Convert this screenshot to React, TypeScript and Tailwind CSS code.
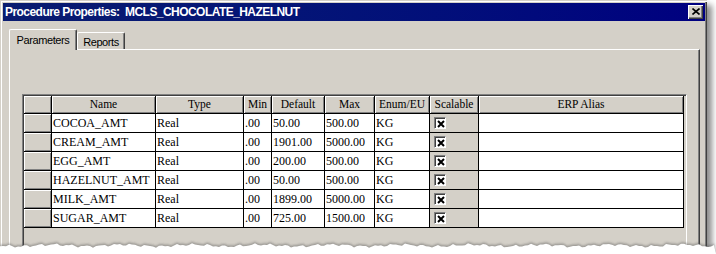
import React from 'react';

// ─── Data ─────────────────────────────────────────────────────────────────────

const HEADERS = ['', 'Name', 'Type', 'Min', 'Default', 'Max', 'Enum/EU', 'Scalable', 'ERP Alias'];

const ROWS = [
  ['COCOA_AMT', 'Real', '.00', '50.00', '500.00', 'KG'],
  ['CREAM_AMT', 'Real', '.00', '1901.00', '5000.00', 'KG'],
  ['EGG_AMT', 'Real', '.00', '200.00', '500.00', 'KG'],
  ['HAZELNUT_AMT', 'Real', '.00', '50.00', '500.00', 'KG'],
  ['MILK_AMT', 'Real', '.00', '1899.00', '5000.00', 'KG'],
  ['SUGAR_AMT', 'Real', '.00', '725.00', '1500.00', 'KG'],
];

const raised = 'bg-[#d4d0c8] shadow-[inset_1px_1px_0_#ffffff,inset_-1px_-1px_0_#808080]';

// ─── Bits ─────────────────────────────────────────────────────────────────────

function CheckBox() {
  return (
    <div className="flex h-[12px] w-[12px] items-center justify-center border border-t-[#808080] border-l-[#808080] border-r-white border-b-white bg-white shadow-[inset_1px_1px_0_#404040]">
      <svg width="8" height="8" viewBox="0 0 8 8" className="ml-[1px] mt-[1px]">
        <path d="M1 1 L7 7 M7 1 L1 7" stroke="#000" strokeWidth="2" />
      </svg>
    </div>
  );
}

function TornEdge() {
  // ragged bottom of the cropped screenshot
  const pts: string[] = [];
  for (let x = 0; x <= 716; x += 3) {
    const y = 7 + 0.9 * Math.sin(x * 0.09) + 0.9 * Math.sin(x * 0.41 + 1) + 0.6 * Math.sin(x * 1.3);
    pts.push(`${x},${y.toFixed(1)}`);
  }
  const line = pts.join(' L');
  return (
    <svg className="absolute bottom-0 left-0" width="716" height="16" viewBox="0 0 716 16">
      <defs>
        <filter id="soft" x="-5%" y="-50%" width="110%" height="200%">
          <feGaussianBlur stdDeviation="1.2" />
        </filter>
      </defs>
      <path d={`M0,16 L${line} L716,16 Z`} fill="rgba(80,80,80,0.45)" filter="url(#soft)" transform="translate(0,-1)" />
      <path d={`M0,16 L${line} L716,16 Z`} fill="#ffffff" transform="translate(0,0.5)" />
    </svg>
  );
}

// ─── Component ────────────────────────────────────────────────────────────────

export default function App() {
  return (
    <div className="relative h-[254px] w-[716px] overflow-hidden bg-white">
      <div className="h-[254px] w-[707px] bg-[#d4d0c8] p-[3px] pr-[2px] shadow-[inset_1px_1px_0_#d4d0c8,inset_2px_2px_0_#ffffff,inset_-1px_-1px_0_#404040,inset_-2px_-2px_0_#808080,5px_5px_6px_rgba(0,0,0,0.45)]">
        {/* title bar */}
        <div className="flex h-[18px] items-center justify-between bg-gradient-to-r from-[#0a1c70] to-[#000080] pl-[2px] pr-[2px]">
          <span className="whitespace-pre font-['Liberation_Sans',Arial,sans-serif] text-[12px] font-bold tracking-[-0.55px] text-white">
            {'Procedure Properties:  MCLS_CHOCOLATE_HAZELNUT'}
          </span>
          <div className="flex h-[14px] w-[15px] items-center justify-center bg-[#d4d0c8] shadow-[inset_1px_1px_0_#ffffff,inset_-1px_-1px_0_#404040,inset_-2px_-2px_0_#808080]">
            <svg width="8" height="7" viewBox="0 0 8 7" className="-mt-[1px]">
              <path d="M0.5 0.5 L7.5 6.5 M7.5 0.5 L0.5 6.5" stroke="#000" strokeWidth="1.6" />
            </svg>
          </div>
        </div>

        {/* tabs */}
        <div className="ml-[6px] mt-[8px] flex items-end font-['Liberation_Sans',Arial,sans-serif] text-[11px] tracking-[-0.4px] text-black">
          <div className="relative z-10 -mb-[1px] flex h-[21px] w-[68px] justify-center rounded-t-[2px] border-l border-t border-white bg-[#d4d0c8] pt-[2px] shadow-[inset_-1px_0_0_#808080] border-r border-r-[#404040]">
            Parameters
          </div>
          <div className="flex h-[17px] w-[48px] justify-center rounded-t-[2px] border-l border-t border-white bg-[#d4d0c8] pt-[1px] shadow-[inset_-1px_0_0_#808080] border-r border-r-[#404040]">
            Reports
          </div>
        </div>

        {/* tab panel */}
        <div className="ml-[6px] h-[220px] w-[691px] border-l border-t border-white border-r border-r-[#404040] pl-[12px] pt-[44px] shadow-[inset_-1px_0_0_#808080]">
          <div className="h-[170px] w-[665px] border border-t-[#808080] border-l-[#808080] border-r-white border-b-white pl-[1px] pt-[1px] shadow-[inset_1px_1px_0_#404040]">
            <div className="grid grid-cols-[28px_104px_88px_28px_53px_50px_55px_49px_205px] font-['Liberation_Serif','Times_New_Roman',serif] text-black">
              {HEADERS.map((h, i) => (
                <div
                  key={`h${i}`}
                  className={`flex h-[18px] items-center justify-center border-r border-b border-black text-[11.5px] ${raised}`}
                >
                  {h}
                </div>
              ))}
              {ROWS.map((r, ri) => (
                <React.Fragment key={ri}>
                  <div className={`h-[19px] border-r border-b border-black ${raised}`} />
                  {r.map((c, ci) => (
                    <div
                      key={ci}
                      className="flex h-[19px] items-center overflow-hidden whitespace-nowrap border-r border-b border-black bg-white pl-[1px] text-[12px]"
                    >
                      {c}
                    </div>
                  ))}
                  <div className="flex h-[19px] items-center border-r border-b border-black bg-[#d4d0c8] pl-[4px]">
                    <CheckBox />
                  </div>
                  <div className="h-[19px] border-r border-b border-black bg-white" />
                </React.Fragment>
              ))}
            </div>
          </div>
        </div>
      </div>
      <TornEdge />
    </div>
  );
}
